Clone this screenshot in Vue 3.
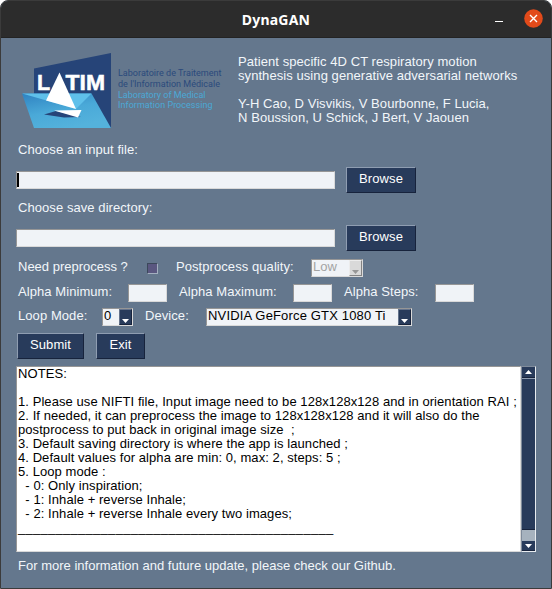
<script setup>
import { ref } from 'vue'

const inputFile = ref('')
const saveDir = ref('')
const about = [
  'Patient specific 4D CT respiratory motion',
  'synthesis using generative adversarial networks',
  '',
  'Y-H Cao, D Visvikis, V Bourbonne, F Lucia,',
  'N Boussion, U Schick, J Bert, V Jaouen',
]
const notes = [
  'NOTES:',
  '',
  '1. Please use NIFTI file, Input image need to be 128x128x128 and in orientation RAI ;',
  '2. If needed, it can preprocess the image to 128x128x128 and it will also do the',
  'postprocess to put back in original image size  ;',
  '3. Default saving directory is where the app is launched ;',
  '4. Default values for alpha are min: 0, max: 2, steps: 5 ;',
  '5. Loop mode :',
  '  - 0: Only inspiration;',
  '  - 1: Inhale + reverse Inhale;',
  '  - 2: Inhale + reverse Inhale every two images;',
]
</script>

<template>
  <div class="window">
    <header class="titlebar">
      <span class="title">DynaGAN</span>
      <span class="minimize"></span>
      <span class="close">
        <svg width="19" height="19" viewBox="0 0 19 19"><circle cx="9.5" cy="9.5" r="9.3" fill="#e24a1a" /><path d="M6 6l7 7M13 6l-7 7" stroke="#fff" stroke-width="1.4" /></svg>
      </span>
    </header>

    <main class="body">
      <section class="intro">
        <svg class="logo" width="202" height="76" viewBox="0 0 202 76">
          <defs>
            <linearGradient id="hull" x1="0" y1="0" x2="0.5" y2="1">
              <stop offset="0" stop-color="#2f82c1" />
              <stop offset="0.55" stop-color="#4aa9d8" />
              <stop offset="1" stop-color="#54b2dc" />
            </linearGradient>
          </defs>
          <path d="M12 15.5L89 0V75L12 60z" fill="#264478" />
          <path d="M0 40.5H69.5L89 75H12z" fill="url(#hull)" />
          <path d="M0 40.5H69.5L54 56z" fill="#5fc0ea" />
          <path d="M22 61.5L34 58L59 64L42 64.5z" fill="#264478" />
          <path d="M37.5 19.5L54 56L24 47.5z" fill="#fff" />
          <path d="M32 57.5L59.5 57L56 64.5z" fill="#fff" />
          <text class="mark" x="15" y="36.5">L</text>
          <text class="mark" x="43.5" y="36.5" textLength="39.5" lengthAdjust="spacingAndGlyphs">TIM</text>
          <g class="lab" fill="#2b4a7c">
            <text x="96" y="23" textLength="103.5">Laboratoire de Traitement</text>
            <text x="96" y="34" textLength="102">de l'Information Médicale</text>
          </g>
          <g class="lab" fill="#4ba9d6">
            <text x="96" y="44.5" textLength="87.5">Laboratory of Medical</text>
            <text x="96" y="55" textLength="94.5">Information Processing</text>
          </g>
        </svg>
        <div class="about">
          <div v-for="(line, i) in about" :key="i" class="line">{{ line }}</div>
        </div>
      </section>

      <div class="label">Choose an input file:</div>
      <div class="row file">
        <div class="field wide"><i class="caret"></i>{{ inputFile }}</div>
        <button class="btn browse">Browse</button>
      </div>
      <div class="label second">Choose save directory:</div>
      <div class="row file">
        <div class="field wide">{{ saveDir }}</div>
        <button class="btn browse">Browse</button>
      </div>

      <div class="row options">
        <span class="c-need">Need preprocess ?</span>
        <span class="check"></span>
        <span class="c-quality">Postprocess quality:</span>
        <div class="field combo low disabled">
          <span>Low</span>
          <b class="arrow"><svg width="7" height="4" viewBox="0 0 7 4"><path d="M0 0H7L3.5 4z" /></svg></b>
        </div>
      </div>

      <div class="row alphas">
        <span class="c-min">Alpha Minimum:</span>
        <div class="field num"></div>
        <span class="c-max">Alpha Maximum:</span>
        <div class="field num"></div>
        <span class="c-steps">Alpha Steps:</span>
        <div class="field num"></div>
      </div>

      <div class="row device">
        <span class="c-loop">Loop Mode:</span>
        <div class="field combo loop">
          <span>0</span>
          <b class="arrow"><svg width="7" height="4" viewBox="0 0 7 4"><path d="M0 0H7L3.5 4z" /></svg></b>
        </div>
        <span class="c-device">Device:</span>
        <div class="field combo gpu">
          <span>NVIDIA GeForce GTX 1080 Ti</span>
          <b class="arrow"><svg width="7" height="4" viewBox="0 0 7 4"><path d="M0 0H7L3.5 4z" /></svg></b>
        </div>
      </div>

      <div class="row actions">
        <button class="btn submit">Submit</button>
        <button class="btn exit">Exit</button>
      </div>

      <section class="notes">
        <div class="text">
          <div v-for="(line, i) in notes" :key="i" class="line">{{ line }}</div>
          <div class="line rule">__________________________________________</div>
        </div>
        <div class="scroll">
          <b class="step"><svg width="7" height="4" viewBox="0 0 7 4"><path d="M0 4H7L3.5 0z" /></svg></b>
          <i class="thumb"></i>
          <b class="step down"><svg width="7" height="4" viewBox="0 0 7 4"><path d="M0 0H7L3.5 4z" /></svg></b>
        </div>
      </section>

      <footer class="footer">For more information and future update, please check our Github.</footer>
    </main>
  </div>
</template>

<style>
body {
  margin: 0;
  background: #fff;
}
</style>

<style scoped>
* {
  box-sizing: border-box;
}
.window {
  width: 552px;
  height: 589px;
  border: 1px solid #3b3b3b;
  border-radius: 8px 8px 0 0;
  background: #64778d;
  overflow: hidden;
  color: #f2f6fa;
  font: 13px/16px "Liberation Sans", sans-serif;
  letter-spacing: 0.07px;
}
.titlebar {
  height: 37px;
  display: grid;
  grid-template-columns: 1fr auto 1fr;
  background: #2c2c2c;
  border-bottom: 1px solid #232323;
  position: relative;
}
.title {
  grid-column: 2;
  font: bold 14px/37px "Noto Sans", sans-serif;
  letter-spacing: 0.2px;
  color: #fff;
}
.minimize {
  position: absolute;
  left: 494px;
  top: 20px;
  width: 8px;
  height: 1px;
  background: #fff;
}
.close {
  position: absolute;
  right: 8px;
  top: 8px;
  height: 19px;
}
svg {
  display: block;
  flex: none;
}
.body {
  padding: 15px 14px 0 15px;
}
.intro {
  height: 89px;
  display: flex;
  padding-left: 6px;
}
.about {
  margin: 1px 0 0 14px;
}
.mark {
  font: bold 21.5px "Liberation Sans", sans-serif;
  letter-spacing: 0;
  fill: #fff;
  stroke: #fff;
  stroke-width: 0.5px;
}
.lab {
  font: 9px Roboto, sans-serif;
  letter-spacing: 0;
}
.label {
  height: 14px;
  padding-left: 2px;
}
.label.second {
  margin-top: 7px;
}
.row {
  display: flex;
  align-items: flex-start;
}
.file {
  height: 26px;
  margin-top: 11px;
  align-items: center;
}
.field {
  height: 18px;
  background: #f0f3f7;
  border: 1px solid;
  border-color: #969696 #d9d9d9 #d9d9d9 #969696;
}
.wide {
  width: 319px;
  margin-right: 11px;
}
.caret {
  display: block;
  width: 2px;
  height: 14px;
  margin-top: 1px;
  background: #000;
}
.btn {
  height: 26px;
  padding: 3px 0 0;
  border: 1px solid;
  border-color: #8f9db1 #17233c #17233c #8f9db1;
  background: #283b5b;
  color: #fff;
  display: flex;
  justify-content: center;
  align-items: flex-start;
  font: 13px/16px "Liberation Sans", sans-serif;
  letter-spacing: 0.1px;
}
.browse {
  width: 70px;
}
.options {
  height: 18px;
  margin-top: 8px;
  padding-left: 2px;
}
.c-need {
  width: 129px;
  letter-spacing: 0;
}
.check {
  width: 11px;
  height: 11px;
  margin: 4px 18px 0 0;
  background: #5a5780;
  border: 1px solid;
  border-color: #3c485b #a3afbf #a3afbf #3c485b;
}
.c-quality {
  width: 135px;
}
.combo {
  display: flex;
  justify-content: space-between;
  color: #000;
  padding-left: 1px;
}
.combo span {
  margin-top: -1px;
  white-space: nowrap;
}
.arrow {
  width: 13px;
  height: 16px;
  padding: 9px 0 0 2px;
  background: #283b5b;
  border: 1px solid;
  border-color: #64738c #17233c #17233c #64738c;
  fill: #fff;
}
.low {
  width: 52px;
}
.disabled {
  color: #a3a3a3;
}
.disabled .arrow {
  background: #d9d9d9;
  border-color: #ececec #838383 #838383 #ececec;
  fill: #969696;
}
.alphas {
  height: 18px;
  margin-top: 7px;
  padding-left: 2px;
}
.num {
  width: 39px;
}
.c-min {
  width: 110px;
}
.c-max {
  width: 126px;
  padding-left: 12px;
}
.c-steps {
  width: 103px;
  padding-left: 12px;
}
.device {
  height: 18px;
  margin-top: 6px;
  padding-left: 2px;
}
.c-loop {
  width: 84px;
}
.loop {
  width: 31px;
}
.c-device {
  width: 73px;
  padding-left: 12px;
}
.gpu {
  width: 206px;
  letter-spacing: 0.16px;
}
.actions {
  margin-top: 7px;
  padding-left: 1px;
  gap: 12px;
}
.submit {
  width: 67px;
}
.exit {
  width: 49px;
}
.notes {
  display: flex;
  width: 520px;
  height: 186px;
  margin-top: 7px;
}
.text {
  flex: 1;
  background: #fff;
  color: #000;
  padding-left: 1px;
  border: 1px solid;
  border-color: #969696 #d9d9d9 #d9d9d9 #969696;
}
.line {
  height: 14px;
  white-space: pre;
}
.text .line {
  line-height: 14px;
}
.text .rule {
  letter-spacing: 0.28px;
}
.scroll {
  width: 15px;
  display: flex;
  flex-direction: column;
  background: #a6b2be;
  border: 1px solid;
  border-color: #7f8b9b #e8ecf0 #e8ecf0 #7f8b9b;
}
.step {
  height: 11px;
  padding: 3px 0 0 3px;
  background: #283b5b;
  border-bottom: 1px solid #17233c;
  fill: #fff;
}
.down {
  height: 10px;
}
.thumb {
  height: 152px;
  margin: 0 0 11px;
  background: #283b5b;
  border-top: 1px solid #8f9db1;
  border-bottom: 1px solid #17233c;
}
.footer {
  margin-top: 6px;
  padding-left: 2px;
  letter-spacing: 0.01px;
}
</style>
